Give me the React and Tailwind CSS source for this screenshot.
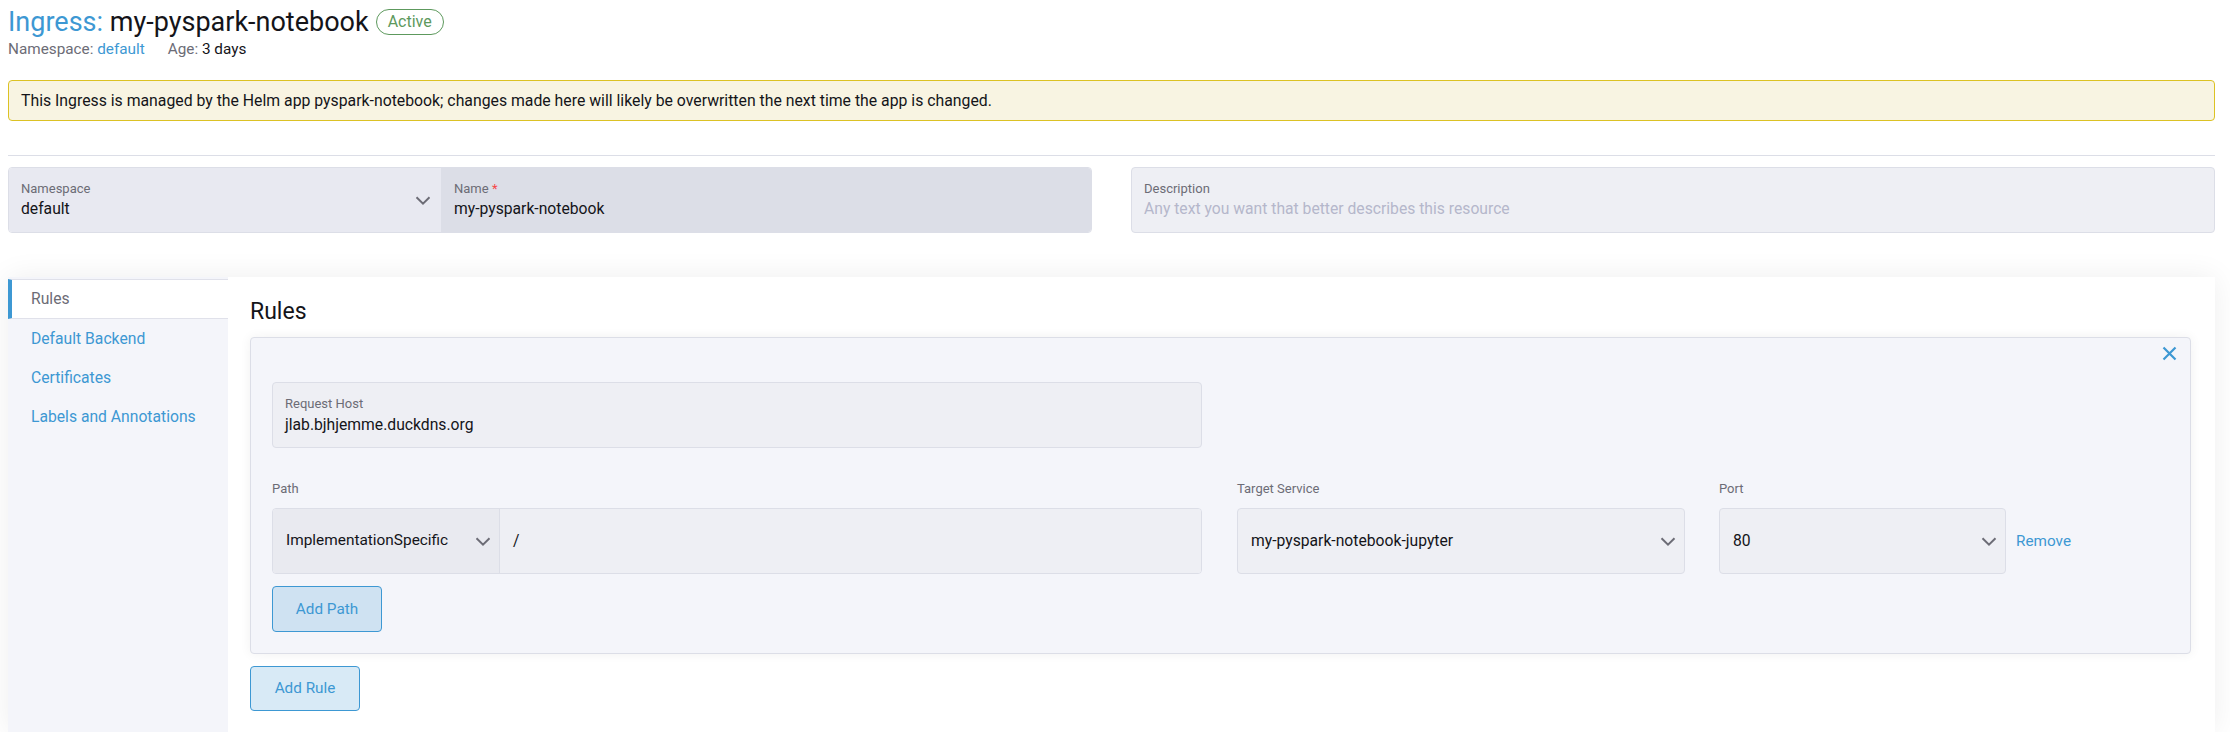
import React from 'react'

function Chevron() {
  return (
    <svg width="16" height="9" viewBox="0 0 16 9" fill="none" className="shrink-0">
      <path d="M1.5 1.2 L8 7.6 L14.5 1.2" stroke="#6c6c76" strokeWidth="2" />
    </svg>
  )
}

function Label({ children }) {
  return <div className="text-[13px] leading-[16px] text-[#6c6c76]">{children}</div>
}

export default function App() {
  const tabs = ['Default Backend', 'Certificates', 'Labels and Annotations']
  return (
    <div className="h-[732px] overflow-hidden bg-white pl-[8px] pr-[15px] font-['Roboto',sans-serif] text-[#141419] flex flex-col">
      {/* header */}
      <div className="pt-[6px]">
        <div className="flex items-center h-[32px]">
          <h1 className="text-[27px] leading-[32px]">
            <span className="text-[#3d98d3]">Ingress:</span> my-pyspark-notebook
          </h1>
          <span className="ml-[7px] h-[26px] px-[11px] rounded-full border border-[#5d995d] text-[#5d995d] text-[16px] flex items-center">Active</span>
        </div>
        <div className="mt-[1px] text-[15.3px] leading-[20px] text-[#6c6c76] flex gap-[23px]">
          <span>Namespace: <span className="text-[#3d98d3]">default</span></span>
          <span>Age: <span className="text-[#141419]">3 days</span></span>
        </div>
      </div>

      <div className="mt-[21px] h-[41px] rounded-[4px] border border-[#dcc224] bg-[#f8f4e2] px-[12px] flex items-center text-[15.8px]">
        This Ingress is managed by the Helm app pyspark-notebook; changes made here will likely be overwritten the next time the app is changed.
      </div>

      <div className="mt-[34px] border-t border-[#dcdee7]" />

      {/* name / namespace / description */}
      <div className="mt-[11px] grid grid-cols-2 gap-[39px]">
        <div className="flex h-[66px] rounded-[4px] border border-[#dcdee7] overflow-hidden">
          <div className="w-[432px] bg-[#e8e9f1] pl-[12px] pr-[10px] flex items-center">
            <div className="flex-1">
              <Label>Namespace</Label>
              <div className="mt-[2px] text-[15.7px] leading-[20px]">default</div>
            </div>
            <Chevron />
          </div>
          <div className="flex-1 bg-[#dcdee7] pl-[13px] flex flex-col justify-center">
            <Label>Name <span className="text-[#f64747]">*</span></Label>
            <div className="mt-[2px] text-[15.7px] leading-[20px]">my-pyspark-notebook</div>
          </div>
        </div>
        <div className="h-[66px] rounded-[4px] border border-[#dcdee7] bg-[#eeeff4] pl-[12px] flex flex-col justify-center">
          <Label>Description</Label>
          <div className="mt-[2px] text-[15.7px] leading-[20px] text-[#b5b7cb]">Any text you want that better describes this resource</div>
        </div>
      </div>

      {/* tabbed area */}
      <div className="mt-[44px] flex-1 flex shadow-[0_0_28px_rgba(0,0,0,0.07)]">
        <div className="w-[220px] bg-[#f4f5fa] pt-[2px]">
          <div className="h-[40px] bg-white border-l-4 border-[#3d98d3] border-y border-y-[#e0e1ea] border-r border-r-[#e0e1ea] pl-[19px] flex items-center text-[15.7px] text-[#6c6c76] -mr-px">Rules</div>
          {tabs.map(t => (
            <div key={t} className="h-[39px] pl-[23px] flex items-center text-[15.7px] text-[#3d98d3]">{t}</div>
          ))}
        </div>

        <div className="flex-1 bg-white pt-[20px] pl-[22px] pr-[24px]">
          <h2 className="text-[23px] leading-[30px] mb-[10px]">Rules</h2>

          <div className="relative rounded-[4px] border border-[#dcdee7] bg-[#f4f5fa] shadow-[0_0_12px_rgba(0,0,0,0.06)] pt-[44px] px-[21px] pb-[21px]">
            <svg className="absolute top-[8px] right-[13px]" width="15" height="15" viewBox="0 0 15 15" fill="none">
              <path d="M1.5 1.5 L13.5 13.5 M13.5 1.5 L1.5 13.5" stroke="#3d98d3" strokeWidth="2.2" />
            </svg>

            <div className="w-[930px] h-[66px] rounded-[4px] border border-[#dcdee7] bg-[#eeeff4] pl-[12px] flex flex-col justify-center">
              <Label>Request Host</Label>
              <div className="mt-[3px] text-[15.7px] leading-[20px]">jlab.bjhjemme.duckdns.org</div>
            </div>

            <div className="mt-[33px] flex items-start">
              <div className="w-[930px]">
                <Label>Path</Label>
                <div className="mt-[11px] flex h-[66px] rounded-[4px] border border-[#dcdee7] overflow-hidden">
                  <div className="w-[227px] bg-[#e9eaf0] border-r border-[#dcdee7] pl-[13px] pr-[8px] flex items-center">
                    <span className="flex-1 text-[15.4px]">ImplementationSpecific</span>
                    <Chevron />
                  </div>
                  <div className="flex-1 bg-[#eeeff4] pl-[13px] flex items-center text-[15.7px]">/</div>
                </div>
                <button className="mt-[12px] w-[110px] h-[46px] rounded-[4px] border border-[#3d98d3] bg-[rgba(61,152,211,0.2)] text-[#3d98d3] text-[15.3px]">Add Path</button>
              </div>

              <div className="ml-[35px] w-[448px]">
                <Label>Target Service</Label>
                <div className="mt-[11px] h-[66px] rounded-[4px] border border-[#dcdee7] bg-[#eeeff4] pl-[13px] pr-[8px] flex items-center">
                  <span className="flex-1 text-[15.7px]">my-pyspark-notebook-jupyter</span>
                  <Chevron />
                </div>
              </div>

              <div className="ml-[34px] w-[287px]">
                <Label>Port</Label>
                <div className="mt-[11px] h-[66px] rounded-[4px] border border-[#dcdee7] bg-[#eeeff4] pl-[13px] pr-[8px] flex items-center">
                  <span className="flex-1 text-[15.7px]">80</span>
                  <Chevron />
                </div>
              </div>

              <div className="ml-[10px] mt-[27px] h-[66px] flex items-center text-[15.3px] text-[#3d98d3]">Remove</div>
            </div>
          </div>

          <button className="mt-[12px] w-[110px] h-[45px] rounded-[4px] border border-[#3d98d3] bg-[rgba(61,152,211,0.2)] text-[#3d98d3] text-[15.3px]">Add Rule</button>
        </div>
      </div>
    </div>
  )
}
